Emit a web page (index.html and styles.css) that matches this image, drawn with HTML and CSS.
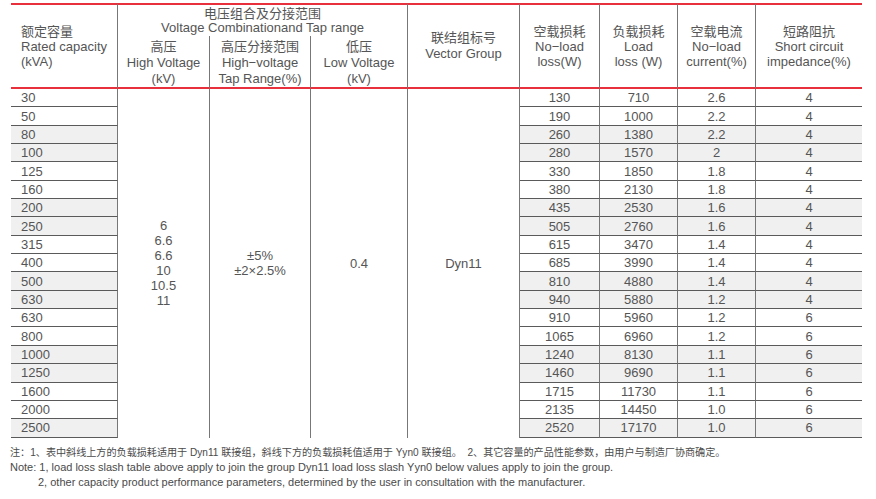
FILE: index.html
```html
<!DOCTYPE html>
<html lang="zh">
<head>
<meta charset="utf-8">
<title>Transformer parameters</title>
<link rel="stylesheet" href="styles.css">
</head>
<body>
<div class="wrap">
<table class="spec">
  <colgroup>
    <col class="c1"><col class="c2"><col class="c3"><col class="c4"><col class="c5"><col class="c6"><col class="c7"><col class="c8"><col class="c9">
  </colgroup>
  <thead>
    <tr class="h1">
      <th rowspan="2" class="left first bot">额定容量<br>Rated capacity<br>(kVA)</th>
      <th colspan="3" class="group">电压组合及分接范围<br>Voltage Combinationand Tap range</th>
      <th rowspan="2" class="bot lh16">联结组标号<br>Vector Group</th>
      <th rowspan="2" class="bot">空载损耗<br>No−load<br>loss(W)</th>
      <th rowspan="2" class="bot">负载损耗<br>Load<br>loss (W)</th>
      <th rowspan="2" class="bot">空载电流<br>No−load<br>current(%)</th>
      <th rowspan="2" class="bot last">短路阻抗<br>Short circuit<br>impedance(%)</th>
    </tr>
    <tr class="h2">
      <th class="bot lh16">高压<br>High Voltage<br>(kV)</th>
      <th class="bot lh16">高压分接范围<br>High−voltage<br>Tap Range(%)</th>
      <th class="bot lh16">低压<br>Low Voltage<br>(kV)</th>
    </tr>
  </thead>
  <tbody>
    <tr><td class="cap">30</td>
      <td rowspan="19" class="merged">6<br>6.6<br>6.6<br>10<br>10.5<br>11</td>
      <td rowspan="19" class="merged">±5%<br>±2×2.5%</td>
      <td rowspan="19" class="merged">0.4</td>
      <td rowspan="19" class="merged">Dyn11</td>
      <td class="num">130</td><td class="num">710</td><td class="num">2.6</td><td class="num last">4</td></tr>
    <tr><td class="cap">50</td><td class="num">190</td><td class="num">1000</td><td class="num">2.2</td><td class="num last">4</td></tr>
    <tr class="alt"><td class="cap">80</td><td class="num">260</td><td class="num">1380</td><td class="num">2.2</td><td class="num last">4</td></tr>
    <tr class="alt"><td class="cap">100</td><td class="num">280</td><td class="num">1570</td><td class="num">2</td><td class="num last">4</td></tr>
    <tr><td class="cap">125</td><td class="num">330</td><td class="num">1850</td><td class="num">1.8</td><td class="num last">4</td></tr>
    <tr><td class="cap">160</td><td class="num">380</td><td class="num">2130</td><td class="num">1.8</td><td class="num last">4</td></tr>
    <tr class="alt"><td class="cap">200</td><td class="num">435</td><td class="num">2530</td><td class="num">1.6</td><td class="num last">4</td></tr>
    <tr class="alt"><td class="cap">250</td><td class="num">505</td><td class="num">2760</td><td class="num">1.6</td><td class="num last">4</td></tr>
    <tr><td class="cap">315</td><td class="num">615</td><td class="num">3470</td><td class="num">1.4</td><td class="num last">4</td></tr>
    <tr><td class="cap">400</td><td class="num">685</td><td class="num">3990</td><td class="num">1.4</td><td class="num last">4</td></tr>
    <tr class="alt"><td class="cap">500</td><td class="num">810</td><td class="num">4880</td><td class="num">1.4</td><td class="num last">4</td></tr>
    <tr class="alt"><td class="cap">630</td><td class="num">940</td><td class="num">5880</td><td class="num">1.2</td><td class="num last">4</td></tr>
    <tr><td class="cap">630</td><td class="num">910</td><td class="num">5960</td><td class="num">1.2</td><td class="num last">6</td></tr>
    <tr><td class="cap">800</td><td class="num">1065</td><td class="num">6960</td><td class="num">1.2</td><td class="num last">6</td></tr>
    <tr class="alt"><td class="cap">1000</td><td class="num">1240</td><td class="num">8130</td><td class="num">1.1</td><td class="num last">6</td></tr>
    <tr class="alt"><td class="cap">1250</td><td class="num">1460</td><td class="num">9690</td><td class="num">1.1</td><td class="num last">6</td></tr>
    <tr><td class="cap">1600</td><td class="num">1715</td><td class="num">11730</td><td class="num">1.1</td><td class="num last">6</td></tr>
    <tr><td class="cap">2000</td><td class="num">2135</td><td class="num">14450</td><td class="num">1.0</td><td class="num last">6</td></tr>
    <tr class="alt"><td class="cap">2500</td><td class="num">2520</td><td class="num">17170</td><td class="num">1.0</td><td class="num last">6</td></tr>
  </tbody>
</table>
<div class="notes">
  <p class="cn">注：1、表中斜线上方的负载损耗适用于 Dyn11 联接组，斜线下方的负载损耗值适用于 Yyn0 联接组。&nbsp; 2、其它容量的产品性能参数，由用户与制造厂协商确定。</p>
  <p>Note: 1, load loss slash table above apply to join the group Dyn11 load loss slash Yyn0 below values apply to join the group.</p>
  <p class="indent">2, other capacity product performance parameters, determined by the user in consultation with the manufacturer.</p>
</div>
</div>
</body>
</html>
```

FILE: styles.css
```css
html, body {
  margin: 0;
  padding: 0;
  background: #ffffff;
}

body {
  font-family: "Liberation Sans", "Noto Sans CJK SC", sans-serif;
  color: #555555;
}

.wrap {
  padding: 3px 0 0 11px;
}

.spec {
  border-collapse: separate;
  border-spacing: 0;
  table-layout: fixed;
  width: 851px;
  font-size: 13px;
}

.c1 { width: 107px; }
.c2 { width: 92px; }
.c3 { width: 101px; }
.c4 { width: 97px; }
.c5 { width: 112px; }
.c6 { width: 80px; }
.c7 { width: 78px; }
.c8 { width: 78px; }
.c9 { width: 106px; }

.spec th {
  font-weight: normal;
  padding: 0;
  line-height: 15px;
  text-align: center;
  vertical-align: middle;
  border-right: 1px solid #777777;
}

.spec .h1 th {
  border-top: 2px solid #e8303c;
}

.spec .h1 {
  height: 33px;
}

.spec .h2 {
  height: 53px;
}

.spec th.group {
  line-height: 14px;
  vertical-align: top;
  padding-top: 2px;
}

.spec th.bot {
  border-bottom: 2px solid #e8303c;
}

.spec th.lh16 {
  line-height: 16px;
}

.spec .h2 th.lh16 {
  padding-top: 2px;
}

.spec th.left {
  text-align: left;
  padding-left: 10px;
}

.spec .last {
  border-right: none !important;
}

.spec tbody tr {
  height: 18.35px;
}

.spec td {
  padding: 0;
  line-height: 15px;
  vertical-align: middle;
  border-right: 1px solid #777777;
}

.spec td.cap {
  text-align: left;
  padding-left: 10px;
  border-bottom: 1px solid #5a5a5a;
}

.spec td.num {
  text-align: center;
  border-bottom: 1px solid #5a5a5a;
}

.spec td.merged {
  text-align: center;
  background: #ffffff;
}

.spec tr.alt td.cap,
.spec tr.alt td.num {
  background: #f0f0f0;
}

.notes {
  margin-top: 7px;
  margin-left: -1px;
  font-size: 11px;
  line-height: 15px;
  color: #4a4a4a;
}

.notes p {
  margin: 0;
}

.notes .cn {
  font-size: 10.1px;
}

.notes .indent {
  padding-left: 28px;
}
```
